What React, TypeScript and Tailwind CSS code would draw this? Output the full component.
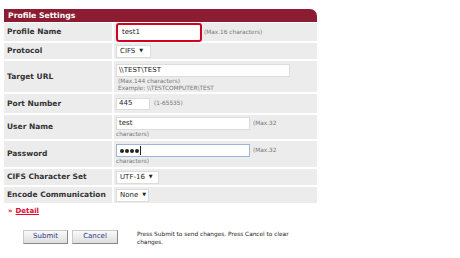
export default function App() {
  const font = "font-['DejaVu_Sans',Verdana,sans-serif]";
  const label = "bg-[#ececec] pl-[3px] flex items-center font-bold text-[7.5px] text-[#333]";
  const cell = "bg-[#ececec] pl-[2px] flex";
  const small = "text-[5.8px] leading-[7px] text-[#777]";
  const select = "h-[13px] bg-white border border-[#dcdcdc] flex items-center pl-[3px] gap-[4px] text-[7px] text-[#222]";

  return (
    <div className={`${font} w-[460px] h-[258px] bg-white pl-[4px] pt-[9px]`}>
      <div className="w-[313px]">
        <div className="h-[13px] bg-[#8b1c31] rounded-tr-[7px] pl-[4px] flex items-center text-white font-bold text-[7.7px]">
          Profile Settings
        </div>
        <div className="grid grid-cols-[108px_1fr] gap-[2px] mt-[1px]">
          <div className={`${label} h-[18px]`}>Profile Name</div>
          <div className={`${cell} h-[18px] items-center pl-0 gap-[2px]`}>
            <div className="w-[86px] h-[19px] bg-white border-2 border-[#d4001f] rounded-[3px] flex items-center pl-[4px] text-[7px] text-[#222]">test1</div>
            <span className={small}>(Max.16 characters)</span>
          </div>

          <div className={`${label} h-[16px]`}>Protocol</div>
          <div className={`${cell} h-[16px] items-center`}>
            <div className={`${select} w-[35px]`}>CIFS <span className="text-[5px]">▼</span></div>
          </div>

          <div className={`${label} h-[31px]`}>Target URL</div>
          <div className={`${cell} h-[31px] flex-col pt-[3px]`}>
            <div className="w-[174px] h-[13px] bg-white border border-[#dcdcdc] flex items-center pl-[2px] text-[7px] text-[#222]">\\TEST\TEST</div>
            <div className={`${small} pl-[2px] leading-[6px] mt-[1px]`}>(Max.144 characters)</div>
            <div className={`${small} pl-[2px] leading-[6px]`}>Example: \\TESTCOMPUTER\TEST</div>
          </div>

          <div className={`${label} h-[19px]`}>Port Number</div>
          <div className={`${cell} h-[19px] items-center gap-[4px]`}>
            <div className="w-[34px] h-[12px] bg-white border border-[#dcdcdc] flex items-center pl-[2px] text-[7px] text-[#222]">445</div>
            <span className={small}>(1-65535)</span>
          </div>

          <div className={`${label} h-[24px]`}>User Name</div>
          <div className={`${cell} h-[24px] flex-col pt-[2px]`}>
            <div className="flex items-center gap-[3px]">
              <div className="w-[134px] h-[13px] bg-white border border-[#dcdcdc] flex items-center pl-[2px] text-[7px] text-[#222]">test</div>
              <span className={small}>(Max.32</span>
            </div>
            <div className={`${small} mt-[1px]`}>characters)</div>
          </div>

          <div className={`${label} h-[26px]`}>Password</div>
          <div className={`${cell} h-[26px] flex-col pt-[3px]`}>
            <div className="flex items-center gap-[3px]">
              <div className="w-[134px] h-[13px] bg-white border border-[#9fb6d0] flex items-center pl-[3px] gap-[1px] text-[#222]">
                <span className="w-[4px] h-[4px] rounded-full bg-[#222]" />
                <span className="w-[4px] h-[4px] rounded-full bg-[#222]" />
                <span className="w-[4px] h-[4px] rounded-full bg-[#222]" />
                <span className="w-[4px] h-[4px] rounded-full bg-[#222]" />
                <span className="w-[1px] h-[9px] bg-[#222]" />
              </div>
              <span className={small}>(Max.32</span>
            </div>
            <div className={`${small} mt-[1px]`}>characters)</div>
          </div>

          <div className={`${label} h-[16px]`}>CIFS Character Set</div>
          <div className={`${cell} h-[16px] items-center`}>
            <div className={`${select} w-[43px]`}>UTF-16 <span className="text-[5px]">▼</span></div>
          </div>

          <div className={`${label} h-[16px]`}>Encode Communication</div>
          <div className={`${cell} h-[16px] items-center`}>
            <div className={`${select} w-[33px]`}>None <span className="text-[5px]">▼</span></div>
          </div>
        </div>
      </div>

      <div className="flex items-center mt-[3px] pl-[4px] text-[7px] text-[#e3062f]">
        <span className="text-[7px] font-bold">»</span>
        <span className="ml-[3px] font-bold underline">Detail</span>
      </div>

      <div className="flex mt-[13px] pl-[19px]">
        <button className="w-[45px] h-[14px] bg-gradient-to-b from-[#fafafa] to-[#dedede] border border-[#c8c8c8] border-r-[#888] border-b-[#888] text-[7px] text-[#2a3a8a] flex items-center justify-center">Submit</button>
        <button className="w-[46px] h-[14px] ml-[4px] bg-gradient-to-b from-[#fafafa] to-[#dedede] border border-[#c8c8c8] border-r-[#888] border-b-[#888] text-[7px] text-[#2a3a8a] flex items-center justify-center">Cancel</button>
        <div className="ml-[19px] text-[5.8px] leading-[8px] text-[#222] w-[175px]">
          Press Submit to send changes. Press Cancel to clear changes.
        </div>
      </div>
    </div>
  );
}
